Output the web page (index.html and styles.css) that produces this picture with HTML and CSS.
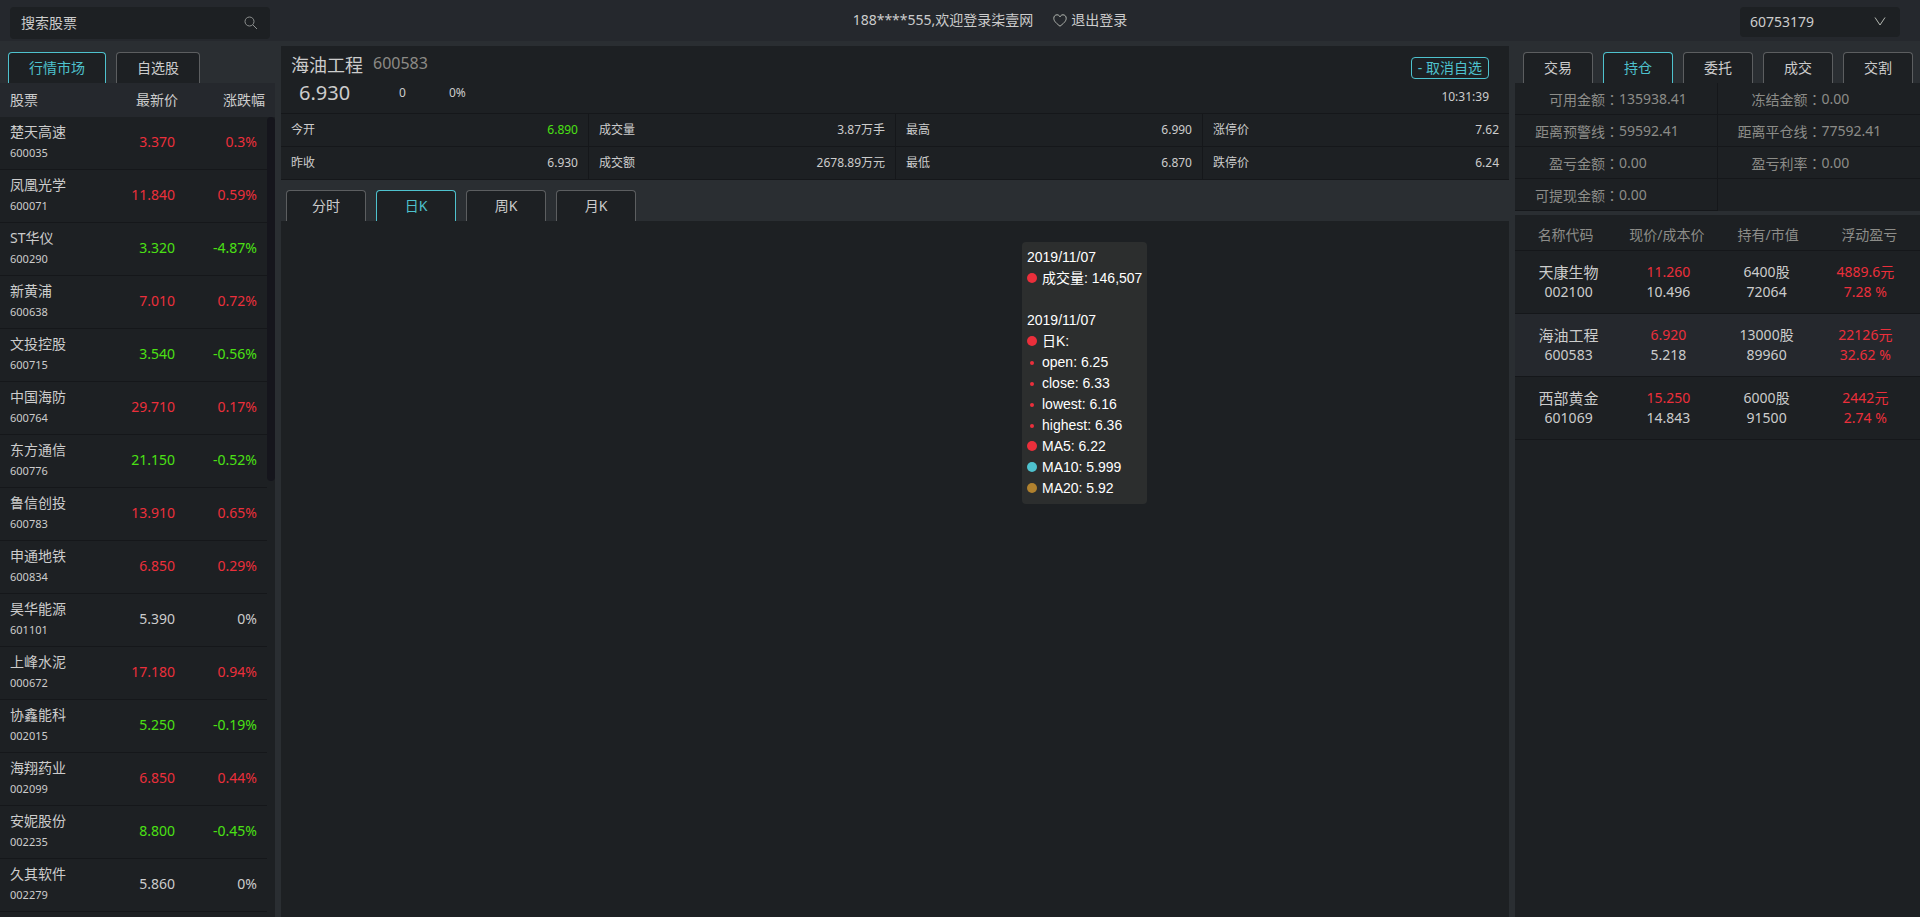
FILE: index.html
```
<!DOCTYPE html>
<html lang="zh-CN">
<head>
<meta charset="UTF-8">
<meta name="viewport" content="width=device-width, initial-scale=1.0">
<title>柒壹网</title>
<link rel="stylesheet" href="styles.css">
</head>
<body>
<header class="top">
    <form class="search">
        <input type="text" placeholder="搜索股票" aria-label="搜索股票">
        <button type="button" aria-label="搜索">
            <svg width="14" height="14" viewBox="0 0 14 14"><circle cx="5.5" cy="5.5" r="4.5"/><path d="M8.8 8.8L13 13"/></svg>
        </button>
    </form>
    <div class="welcome">
        <span>188****555,欢迎登录柒壹网</span>
        <a href="#">
            <svg width="14" height="13" viewBox="0 0 14 13"><path d="M7 12.2C4 9.8 0.8 7.4 0.8 4.3C0.8 2.2 2.2 0.8 4 0.8C5.4 0.8 6.5 1.6 7 2.8C7.5 1.6 8.6 0.8 10 0.8C11.8 0.8 13.2 2.2 13.2 4.3C13.2 7.4 10 9.8 7 12.2Z"/></svg>
            退出登录
        </a>
    </div>
    <div class="account">
        <select aria-label="账户">
            <option>60753179</option>
        </select>
        <svg width="12" height="9" viewBox="0 0 12 9"><path d="M1 0.5L6 8L11 0.5"/></svg>
    </div>
</header>

<main class="layout">
    <section class="market">
        <nav class="tabs">
            <button class="tab tab-wide active">行情市场</button>
            <button class="tab tab-mid">自选股</button>
        </nav>
        <div class="stock-list">
            <table class="stocks">
                <thead>
                    <tr><th>股票</th><th>最新价</th><th>涨跌幅</th></tr>
                </thead>
                <tbody>
                    <tr class="up"><td><b>楚天高速</b><i>600035</i></td><td>3.370</td><td>0.3%</td></tr>
                    <tr class="up"><td><b>凤凰光学</b><i>600071</i></td><td>11.840</td><td>0.59%</td></tr>
                    <tr class="down"><td><b>ST华仪</b><i>600290</i></td><td>3.320</td><td>-4.87%</td></tr>
                    <tr class="up"><td><b>新黄浦</b><i>600638</i></td><td>7.010</td><td>0.72%</td></tr>
                    <tr class="down"><td><b>文投控股</b><i>600715</i></td><td>3.540</td><td>-0.56%</td></tr>
                    <tr class="up"><td><b>中国海防</b><i>600764</i></td><td>29.710</td><td>0.17%</td></tr>
                    <tr class="down"><td><b>东方通信</b><i>600776</i></td><td>21.150</td><td>-0.52%</td></tr>
                    <tr class="up"><td><b>鲁信创投</b><i>600783</i></td><td>13.910</td><td>0.65%</td></tr>
                    <tr class="up"><td><b>申通地铁</b><i>600834</i></td><td>6.850</td><td>0.29%</td></tr>
                    <tr><td><b>昊华能源</b><i>601101</i></td><td>5.390</td><td>0%</td></tr>
                    <tr class="up"><td><b>上峰水泥</b><i>000672</i></td><td>17.180</td><td>0.94%</td></tr>
                    <tr class="down"><td><b>协鑫能科</b><i>002015</i></td><td>5.250</td><td>-0.19%</td></tr>
                    <tr class="up"><td><b>海翔药业</b><i>002099</i></td><td>6.850</td><td>0.44%</td></tr>
                    <tr class="down"><td><b>安妮股份</b><i>002235</i></td><td>8.800</td><td>-0.45%</td></tr>
                    <tr><td><b>久其软件</b><i>002279</i></td><td>5.860</td><td>0%</td></tr>
                </tbody>
            </table>
            <div class="thumb"></div>
        </div>
    </section>

    <section class="detail">
        <div class="quote">
            <div class="quote-main">
                <h1>海油工程 <small>600583</small></h1>
                <div class="quote-price">
                    <strong>6.930</strong><span>0</span><span>0%</span>
                </div>
            </div>
            <div class="quote-side">
                <button class="unfollow">- 取消自选</button>
                <time>10:31:39</time>
            </div>
        </div>
        <dl class="figures">
            <div><dt>今开</dt><dd class="down">6.890</dd></div>
            <div><dt>成交量</dt><dd>3.87万手</dd></div>
            <div><dt>最高</dt><dd>6.990</dd></div>
            <div><dt>涨停价</dt><dd>7.62</dd></div>
            <div><dt>昨收</dt><dd>6.930</dd></div>
            <div><dt>成交额</dt><dd>2678.89万元</dd></div>
            <div><dt>最低</dt><dd>6.870</dd></div>
            <div><dt>跌停价</dt><dd>6.24</dd></div>
        </dl>
        <nav class="tabs chart-tabs">
            <button class="tab">分时</button>
            <button class="tab active">日K</button>
            <button class="tab">周K</button>
            <button class="tab">月K</button>
        </nav>
        <div class="chart">
            <div class="tooltip">
                <p>2019/11/07</p>
                <p><span class="dot red"></span>成交量: 146,507</p>
                <p class="blank"></p>
                <p>2019/11/07</p>
                <p><span class="dot red"></span>日K:</p>
                <p><span class="dot red small"></span>open: 6.25</p>
                <p><span class="dot red small"></span>close: 6.33</p>
                <p><span class="dot red small"></span>lowest: 6.16</p>
                <p><span class="dot red small"></span>highest: 6.36</p>
                <p><span class="dot red"></span>MA5: 6.22</p>
                <p><span class="dot cyan"></span>MA10: 5.999</p>
                <p><span class="dot gold"></span>MA20: 5.92</p>
            </div>
        </div>
    </section>

    <section class="trade">
        <nav class="tabs">
            <button class="tab">交易</button>
            <button class="tab active">持仓</button>
            <button class="tab">委托</button>
            <button class="tab">成交</button>
            <button class="tab">交割</button>
        </nav>
        <dl class="funds">
            <div><dt>可用金额：</dt><dd>135938.41</dd></div>
            <div><dt>冻结金额：</dt><dd>0.00</dd></div>
            <div><dt>距离预警线：</dt><dd>59592.41</dd></div>
            <div><dt>距离平仓线：</dt><dd>77592.41</dd></div>
            <div><dt>盈亏金额：</dt><dd>0.00</dd></div>
            <div><dt>盈亏利率：</dt><dd>0.00</dd></div>
            <div><dt>可提现金额：</dt><dd>0.00</dd></div>
            <div></div>
        </dl>
        <div class="holdings-box">
            <table class="holdings">
                <thead>
                    <tr><th>名称代码</th><th>现价/成本价</th><th>持有/市值</th><th>浮动盈亏</th></tr>
                </thead>
                <tbody>
                    <tr>
                        <td><b>天康生物</b><i>002100</i></td>
                        <td><span class="up">11.260</span><i>10.496</i></td>
                        <td><span>6400股</span><i>72064</i></td>
                        <td class="up"><span>4889.6元</span><i>7.28 %</i></td>
                    </tr>
                    <tr class="selected">
                        <td><b>海油工程</b><i>600583</i></td>
                        <td><span class="up">6.920</span><i>5.218</i></td>
                        <td><span>13000股</span><i>89960</i></td>
                        <td class="up"><span>22126元</span><i>32.62 %</i></td>
                    </tr>
                    <tr>
                        <td><b>西部黄金</b><i>601069</i></td>
                        <td><span class="up">15.250</span><i>14.843</i></td>
                        <td><span>6000股</span><i>91500</i></td>
                        <td class="up"><span>2442元</span><i>2.74 %</i></td>
                    </tr>
                </tbody>
            </table>
        </div>
    </section>
</main>
</body>
</html>
```
FILE: styles.css
```
* {
    box-sizing: border-box;
}
body {
    margin: 0;
    height: 100vh;
    display: flex;
    flex-direction: column;
    overflow: hidden;
    background: #2a2e32;
    color: #cccccc;
    font-family: "Noto Sans", "Noto Sans CJK SC", sans-serif;
    font-size: 14px;
    line-height: 20px;
}
button, input, select {
    font: inherit;
    color: inherit;
    border: none;
    background: none;
    padding: 0;
}
button {
    cursor: pointer;
}
b, i, th {
    font-weight: normal;
    font-style: normal;
}
dl, dd, p, h1 {
    margin: 0;
}
svg {
    fill: none;
    stroke: #b4b8b2;
}
table {
    width: 100%;
    border-spacing: 0;
    table-layout: fixed;
}
th, td {
    padding: 0;
}
.up {
    color: #eb2f3b;
}
.down {
    color: #4be014;
}

/* top bar */
.top {
    flex: none;
    height: 41px;
    padding: 7px 20px 0 10px;
    display: flex;
    justify-content: space-between;
    align-items: flex-start;
    background: #25282d;
}
.search {
    display: flex;
    align-items: center;
    width: 260px;
    height: 32px;
    padding: 0 12px 0 11px;
    border-radius: 4px;
    background: #1d2023;
}
.search input {
    flex: 1;
    min-width: 0;
    outline: none;
}
.search input::placeholder {
    color: #cccccc;
    opacity: 1;
}
.search svg {
    display: block;
    stroke: #8d908f;
}
.welcome {
    display: flex;
    gap: 20px;
    margin-right: 30px;
    line-height: 26px;
}
.welcome a {
    display: flex;
    align-items: center;
    gap: 4px;
    color: inherit;
    text-decoration: none;
}
.account {
    position: relative;
    width: 160px;
    height: 30px;
    border-radius: 4px;
    background: #1d2023;
}
.account select {
    width: 100%;
    height: 30px;
    padding: 0 10px;
    appearance: none;
}
.account svg {
    position: absolute;
    right: 14px;
    top: 10px;
    pointer-events: none;
}

/* columns */
.layout {
    flex: 1;
    min-height: 0;
    display: grid;
    grid-template-columns: 275px 1fr 405px;
    gap: 6px;
}
.market, .detail, .trade {
    min-width: 0;
    min-height: 0;
    display: flex;
    flex-direction: column;
}
.tabs {
    flex: none;
    display: flex;
    gap: 10px;
    padding: 11px 0 0 8px;
}
.tab {
    flex: none;
    width: 70px;
    height: 31px;
    border: 1px solid #5c5e60;
    border-bottom: none;
    border-radius: 4px 4px 0 0;
    background: #1d2023;
}
.tab-wide {
    width: 98px;
}
.tab-mid {
    width: 84px;
}
.tab.active {
    color: #4ec2ce;
    border-color: #4ec2ce;
}

/* stock list */
.stock-list {
    flex: 1;
    min-height: 0;
    position: relative;
    padding-right: 8px;
    overflow: hidden;
    background: #1d2023;
}
.stocks th {
    height: 34px;
    padding-right: 2px;
    text-align: right;
    background: #25282d;
}
.stocks th:first-child {
    width: 100px;
    text-align: left;
    padding-left: 10px;
}
.stocks th:nth-child(2) {
    width: 80px;
}
.stocks th:last-child {
    box-shadow: 8px 0 0 #25282d;
}
.stocks td {
    height: 53px;
    padding: 0 5px 2px 0;
    text-align: right;
    border-bottom: 1px solid #15171a;
}
.stocks td:first-child {
    padding: 0 0 0 10px;
    text-align: left;
    color: #cccccc;
}
.stocks td:last-child {
    padding-right: 10px;
}
.stocks tbody tr:not([class]), .stocks b, .stocks i {
    color: #cccccc;
}
.stocks b, .stocks i {
    display: block;
}
.stocks i {
    font-size: 11px;
    line-height: 22px;
}
.thumb {
    position: absolute;
    top: 34px;
    right: 0;
    width: 8px;
    height: 364px;
    border-radius: 4px;
    background: #15151c;
}

/* quote */
.quote {
    margin-top: 5px;
    padding: 7px 20px 0 10px;
    height: 67px;
    display: flex;
    justify-content: space-between;
    background: #1d2023;
}
h1 {
    display: flex;
    gap: 10px;
    font-size: 18px;
    font-weight: normal;
    line-height: 24px;
}
h1 small {
    font-size: 16px;
    line-height: 20px;
    color: #8c8a86;
}
.quote-price {
    display: flex;
    align-items: center;
    padding-left: 8px;
    font-size: 12px;
}
.quote-price strong {
    width: 100px;
    font-size: 20px;
    font-weight: normal;
    line-height: 32px;
}
.quote-price span {
    width: 50px;
}
.quote-side {
    display: flex;
    flex-direction: column;
    align-items: flex-end;
    padding-top: 4px;
    gap: 8px;
    font-size: 12px;
}
.unfollow {
    height: 22px;
    padding: 0 6px;
    font-size: 14px;
    line-height: 20px;
    color: #4ec2ce;
    border: 1px solid #4ec2ce;
    border-radius: 4px;
}
.figures {
    display: grid;
    grid-template-columns: repeat(4, 1fr);
    background: #1d2023;
    border-bottom: 1px solid #15171a;
    font-size: 12px;
}
.figures div {
    display: flex;
    justify-content: space-between;
    padding: 6px 10px;
    border-top: 1px solid #15171a;
}
.figures div:not(:nth-child(4n+1)) {
    border-left: 1px solid #15171a;
}
.chart-tabs {
    padding: 10px 5px 0;
}
.chart-tabs .tab {
    width: 80px;
}
.chart {
    flex: 1;
    position: relative;
    background: #1d2023;
}
.tooltip {
    position: absolute;
    left: 741px;
    top: 21px;
    padding: 5px;
    border-radius: 4px;
    background: #2c2e2e;
    color: #ffffff;
    font-family: "Liberation Sans", "Noto Sans CJK SC", sans-serif;
    line-height: 21px;
    white-space: nowrap;
}
.tooltip p {
    height: 21px;
}
.dot {
    display: inline-block;
    width: 10px;
    height: 10px;
    margin-right: 5px;
    border-radius: 50%;
}
.dot.small {
    width: 4px;
    height: 4px;
    margin: 0 8px 2px 3px;
}
.red {
    background: #eb2f3b;
}
.cyan {
    background: #4ec2ce;
}
.gold {
    background: #b0812e;
}

/* account funds and holdings */
.funds {
    display: grid;
    grid-template-columns: 1fr 1fr;
    margin-bottom: 4px;
    background: #1d2023;
    color: #8c8c88;
}
.funds div {
    display: flex;
    height: 32px;
    padding-top: 6px;
    border-bottom: 1px solid #15171a;
}
.funds div:nth-child(odd) {
    border-right: 1px solid #15171a;
}
.funds div:last-child {
    border-bottom: none;
}
.funds dt {
    width: 104px;
    text-align: right;
    /* the TC face centres the full-width colon */
    font-family: "Noto Sans CJK TC", sans-serif;
    font-feature-settings: "locl" 0;
}
.holdings-box {
    flex: 1;
    background: #1d2023;
}
.holdings th {
    height: 36px;
    padding-top: 4px;
    color: #8c8c88;
    border-bottom: 1px solid #15171a;
}
.holdings td {
    height: 63px;
    text-align: center;
    border-bottom: 1px solid #15171a;
}
.holdings td:first-child {
    padding-left: 6px;
}
.holdings td:nth-child(2) {
    padding-left: 3px;
}
.holdings td:nth-child(3) {
    padding-right: 3px;
}
.holdings td:last-child {
    padding-right: 8px;
}
.holdings .selected {
    background: #25282d;
}
.holdings b, .holdings i, .holdings span {
    display: block;
}
.holdings b {
    font-size: 15px;
}
```
